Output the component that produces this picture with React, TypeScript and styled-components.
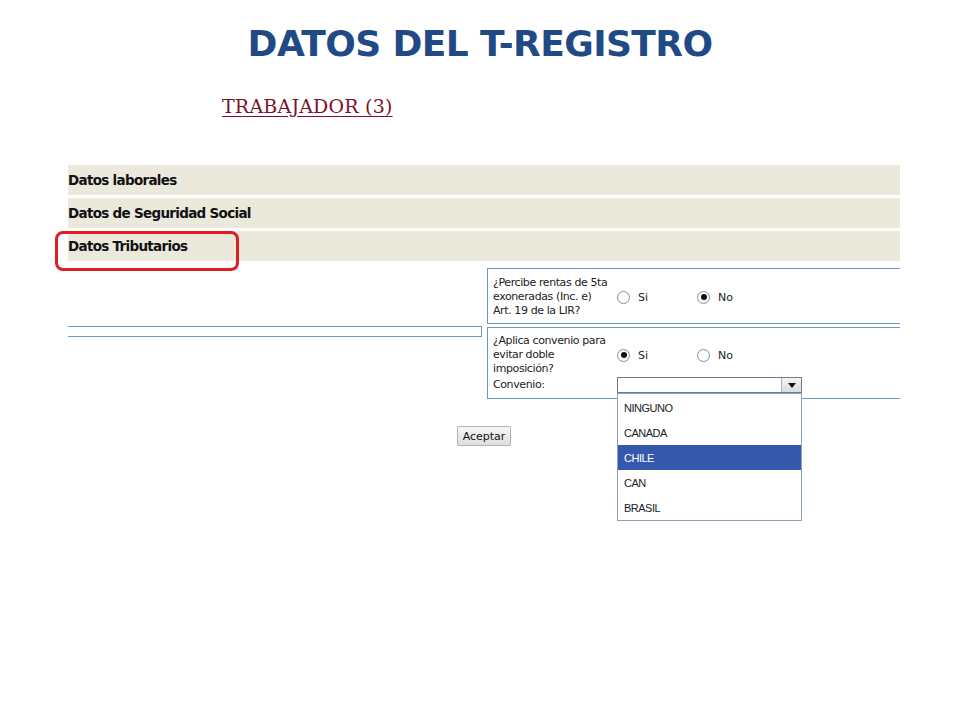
import { FC } from "react";
import styled, { createGlobalStyle } from "styled-components";

const GlobalStyle = createGlobalStyle`
  body {
    margin: 0;
    background: #ffffff;
    font-family: "DejaVu Sans", Verdana, sans-serif;
  }
`;

const Page = styled.div`
  width: 960px;
  height: 720px;
  position: relative;
  overflow: hidden;
`;

const Title = styled.h1`
  margin: 0;
  padding-top: 22px;
  text-align: center;
  font-family: "DejaVu Sans", Verdana, sans-serif;
  font-weight: 700;
  font-size: 36px;
  line-height: 44px;
  color: #1f4a86;
  letter-spacing: -0.6px;
`;

const Subtitle = styled.div`
  margin: 28px 0 0 222px;
  font-family: "DejaVu Serif", "Liberation Serif", serif;
  font-size: 19px;
  line-height: 24px;
  color: #7d1028;
  text-decoration: underline;
  text-underline-offset: 3px;
  letter-spacing: 0.2px;
`;

const Panel = styled.div`
  margin: 47px 0 0 68px;
  width: 832px;
  position: relative;
`;

const SectionRow = styled.div`
  height: 30px;
  margin-bottom: 3px;
  background: #ebe8dc;
  display: flex;
  align-items: center;
  font-family: "DejaVu Sans", Verdana, sans-serif;
  font-weight: 700;
  font-size: 13.5px;
  letter-spacing: -0.7px;
  color: #111;
`;

const Highlight = styled.div`
  position: absolute;
  left: -13px;
  top: 66px;
  width: 178px;
  height: 34px;
  border: 3px solid #e01e22;
  border-radius: 8px;
`;

const FormGrid = styled.div`
  display: grid;
  grid-template-columns: 414px 1fr;
  column-gap: 5px;
  margin-top: 7px;
`;

const LeftCol = styled.div`
  padding-top: 58px;
`;

const EmptyBox = styled.div`
  height: 9px;
  border: 1px solid #6f97c4;
  border-left: none;
`;

const RightCol = styled.div`
  display: flex;
  flex-direction: column;
  gap: 3px;
`;

const QuestionBox = styled.div<{ $tall?: boolean }>`
  border: 1px solid #6f97c4;
  border-right: none;
  padding: ${(p) => (p.$tall ? "6px 0 5px 5px" : "7px 0 5px 5px")};
  position: relative;
`;

const QuestionRow = styled.div`
  display: flex;
  align-items: center;
`;

const Label = styled.div`
  width: 124px;
  font-size: 11px;
  line-height: 14px;
  color: #222;
  letter-spacing: -0.4px;
  white-space: nowrap;
`;

const RadioOption = styled.div`
  width: 80px;
  display: flex;
  align-items: center;
  gap: 8px;
  font-size: 11px;
  color: #222;
`;

const RadioCircle = styled.span<{ $checked?: boolean }>`
  width: 13px;
  height: 13px;
  box-sizing: border-box;
  border-radius: 50%;
  border: 1px solid #8e8f8f;
  background: radial-gradient(circle, #ffffff 60%, #e4e4e4 100%);
  display: inline-flex;
  align-items: center;
  justify-content: center;
  &::after {
    content: "";
    width: 6px;
    height: 6px;
    border-radius: 50%;
    background: ${(p) => (p.$checked ? "#111" : "transparent")};
  }
`;

const ConvenioRow = styled.div`
  display: flex;
  align-items: center;
  margin-top: 1px;
  position: relative;
`;

const SelectBox = styled.div`
  width: 183px;
  height: 14px;
  border: 1px solid #6b7c93;
  display: flex;
  justify-content: flex-end;
  background: #fff;
`;

const SelectArrow = styled.div`
  width: 19px;
  border-left: 1px solid #a8b3c2;
  background: linear-gradient(#f4f4f4, #dcdcdc);
  display: flex;
  align-items: center;
  justify-content: center;
  &::after {
    content: "";
    border-left: 4px solid transparent;
    border-right: 4px solid transparent;
    border-top: 5px solid #111;
  }
`;

const DropList = styled.ul`
  position: absolute;
  left: 124px;
  top: 16px;
  width: 183px;
  margin: 0;
  padding: 1px 0 0;
  list-style: none;
  background: #fff;
  border: 1px solid #8da2bc;
  z-index: 2;
`;

const DropItem = styled.li<{ $active?: boolean }>`
  height: 25px;
  display: flex;
  align-items: center;
  padding-left: 6px;
  font-family: "Liberation Sans", Arial, sans-serif;
  font-size: 11px;
  letter-spacing: -0.5px;
  color: ${(p) => (p.$active ? "#ffffff" : "#222")};
  background: ${(p) => (p.$active ? "#3557ac" : "transparent")};
`;

const ButtonRow = styled.div`
  display: flex;
  justify-content: center;
  margin-top: 27px;
`;

const AcceptButton = styled.button`
  height: 20px;
  padding: 0 5px;
  font-family: "DejaVu Sans", Verdana, sans-serif;
  font-size: 11px;
  color: #111;
  background: linear-gradient(#f6f6f6, #dedede);
  border: 1px solid #b5b5b5;
  border-radius: 1px;
`;

const options = ["NINGUNO", "CANADA", "CHILE", "CAN", "BRASIL"];

const Radio: FC<{ label: string; checked?: boolean }> = ({ label, checked }) => (
  <RadioOption>
    <RadioCircle $checked={checked} />
    {label}
  </RadioOption>
);

const App: FC = () => {
  return (
    <>
      <GlobalStyle />
      <Page>
        <Title>DATOS DEL T-REGISTRO</Title>
        <Subtitle>TRABAJADOR (3)</Subtitle>
        <Panel>
          <SectionRow>Datos laborales</SectionRow>
          <SectionRow>Datos de Seguridad Social</SectionRow>
          <SectionRow>Datos Tributarios</SectionRow>
          <Highlight />
          <FormGrid>
            <LeftCol>
              <EmptyBox />
            </LeftCol>
            <RightCol>
              <QuestionBox>
                <QuestionRow>
                  <Label>
                    ¿Percibe rentas de 5ta
                    <br />
                    exoneradas (Inc. e)
                    <br />
                    Art. 19 de la LIR?
                  </Label>
                  <Radio label="Si" />
                  <Radio label="No" checked />
                </QuestionRow>
              </QuestionBox>
              <QuestionBox $tall>
                <QuestionRow>
                  <Label>
                    ¿Aplica convenio para
                    <br />
                    evitar doble
                    <br />
                    imposición?
                  </Label>
                  <Radio label="Si" checked />
                  <Radio label="No" />
                </QuestionRow>
                <ConvenioRow>
                  <Label>Convenio:</Label>
                  <SelectBox>
                    <SelectArrow />
                  </SelectBox>
                  <DropList>
                    {options.map((o) => (
                      <DropItem key={o} $active={o === "CHILE"}>
                        {o}
                      </DropItem>
                    ))}
                  </DropList>
                </ConvenioRow>
              </QuestionBox>
            </RightCol>
          </FormGrid>
          <ButtonRow>
            <AcceptButton>Aceptar</AcceptButton>
          </ButtonRow>
        </Panel>
      </Page>
    </>
  );
};

export default App;
